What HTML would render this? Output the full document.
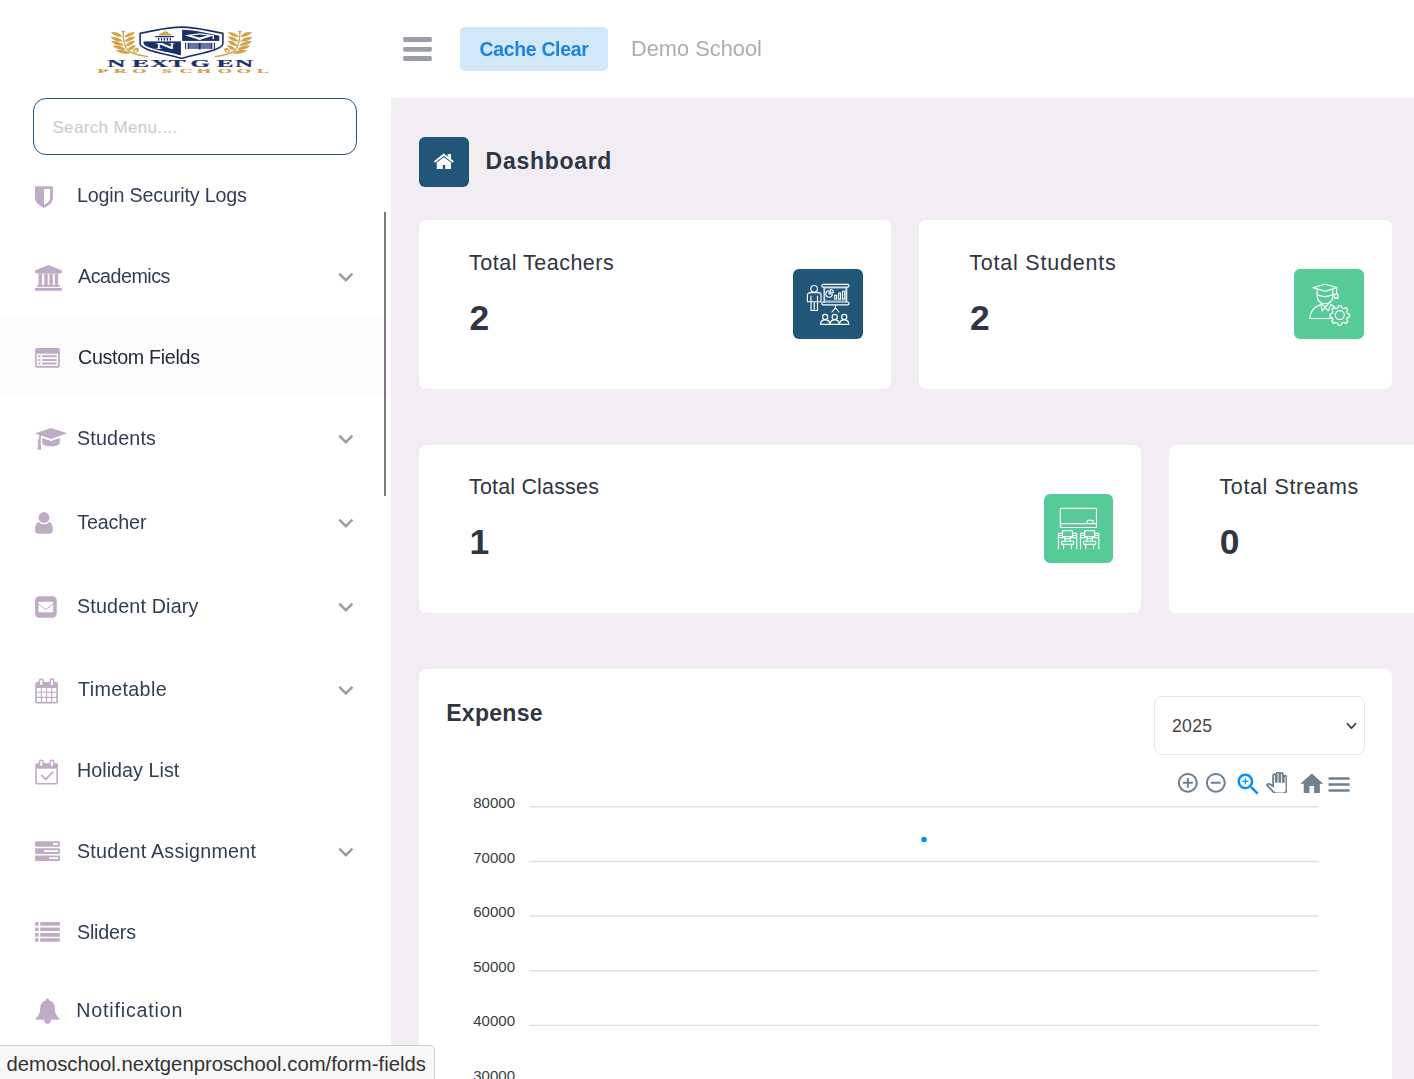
<!DOCTYPE html>
<html lang="en">
<head>
<meta charset="utf-8">
<title>Dashboard - Demo School</title>
<style>
*{box-sizing:border-box;margin:0;padding:0}
html,body{width:1414px;height:1079px;overflow:hidden;background:#fff}
body{position:relative;font-family:"Liberation Sans",sans-serif;color:#2f3542}
.abs{position:absolute}
#content{position:absolute;left:391px;top:98px;width:1023px;height:981px;background:#f1edf3}
#sidebar{position:absolute;left:0;top:0;width:391px;height:1079px;background:#fff}
#search{position:absolute;left:33px;top:98px;width:324px;height:57px;border:1px solid #215679;border-radius:13px;background:#fff}
#search span{position:absolute;left:18.4px;top:19.2px;font-size:17px;line-height:20px;color:#c9c9cd;letter-spacing:.35px}
.mi{position:absolute;left:77px;font-size:19.7px;line-height:24px;height:24px;color:#2f3e55;white-space:nowrap}
.ico{position:absolute;fill:#c5abca}
.chev{position:absolute;left:337px;width:18px;height:12px;fill:none;stroke:#9b9b9b;stroke-width:2.3;stroke-linecap:round;stroke-linejoin:round}
#hl{position:absolute;left:0;top:318px;width:391px;height:78px;background:#fcfcfc}
#thumb{position:absolute;left:384px;top:212px;width:2px;height:283.5px;background:#797979}
.card{position:absolute;background:#fff;border-radius:7px}
.ct{position:absolute;font-size:21.5px;line-height:26px;white-space:nowrap;color:#2f3542;letter-spacing:.5px}
.cn{position:absolute;font-size:35.4px;line-height:36px;font-weight:700;color:#2f3542}
.ib{position:absolute;width:70px;height:70px;border-radius:6px}
.yl{position:absolute;left:440px;width:75px;text-align:right;font-size:15px;line-height:18px;color:#373d3f}
.gl{position:absolute;left:529px;width:790px;height:1.5px;background:#e0e0e0}
</style>
</head>
<body>
<!-- header -->
<div id="content"></div>
<div id="sidebar"></div>

<!-- LOGO -->
<svg class="abs" style="left:90px;top:22px" width="184" height="58" viewBox="90 22 184 58">
<defs><clipPath id="shc"><path d="M143.6,35.7C153,34.2 166,29.8 181.4,29.8 197,29.8 210,34.2 219.3,35.7V43.2C219.3,48 199,51 181.4,55.4 164,51 143.6,48 143.6,43.2Z"/></clipPath></defs>
<g fill="#cfa44d"><path transform="translate(116.75,34.45) rotate(-159.8)" d="M-6.23,0 Q0,-3.50 6.23,0 Q0,3.50 -6.23,0Z"/><path transform="translate(116.65,39.20) rotate(-162.5)" d="M-6.66,0 Q0,-3.50 6.66,0 Q0,3.50 -6.66,0Z"/><path transform="translate(117.45,43.45) rotate(-161.8)" d="M-6.89,0 Q0,-3.50 6.89,0 Q0,3.50 -6.89,0Z"/><path transform="translate(119.30,47.70) rotate(-164.6)" d="M-7.16,0 Q0,-3.50 7.16,0 Q0,3.50 -7.16,0Z"/><path transform="translate(123.05,51.70) rotate(-168.6)" d="M-7.60,0 Q0,-3.50 7.60,0 Q0,3.50 -7.60,0Z"/><path transform="translate(129.55,34.65) rotate(-22.9)" d="M-6.03,0 Q0,-3.50 6.03,0 Q0,3.50 -6.03,0Z"/><path transform="translate(129.85,39.10) rotate(-24.6)" d="M-6.00,0 Q0,-3.50 6.00,0 Q0,3.50 -6.00,0Z"/><path transform="translate(130.35,43.45) rotate(-27.3)" d="M-5.57,0 Q0,-3.50 5.57,0 Q0,3.50 -5.57,0Z"/><path transform="translate(131.75,47.60) rotate(-30.0)" d="M-4.79,0 Q0,-3.50 4.79,0 Q0,3.50 -4.79,0Z"/><ellipse cx="123.2" cy="31.6" rx="2" ry=".9"/><ellipse cx="136" cy="50.3" rx="3" ry="2.2" transform="rotate(-35 136 50.3)"/><ellipse cx="135.6" cy="51" rx="1.3" ry=".9" fill="#fff" transform="rotate(-35 135.6 51)"/><path d="M123.2,31.8C123,38 124,45 127.5,50 130,53.3 136,54.8 147.6,56.6" fill="none" stroke="#cfa44d" stroke-width="1.3" stroke-linecap="round"/></g>
<g transform="translate(363,0) scale(-1,1)"><g fill="#cfa44d"><path transform="translate(116.75,34.45) rotate(-159.8)" d="M-6.23,0 Q0,-3.50 6.23,0 Q0,3.50 -6.23,0Z"/><path transform="translate(116.65,39.20) rotate(-162.5)" d="M-6.66,0 Q0,-3.50 6.66,0 Q0,3.50 -6.66,0Z"/><path transform="translate(117.45,43.45) rotate(-161.8)" d="M-6.89,0 Q0,-3.50 6.89,0 Q0,3.50 -6.89,0Z"/><path transform="translate(119.30,47.70) rotate(-164.6)" d="M-7.16,0 Q0,-3.50 7.16,0 Q0,3.50 -7.16,0Z"/><path transform="translate(123.05,51.70) rotate(-168.6)" d="M-7.60,0 Q0,-3.50 7.60,0 Q0,3.50 -7.60,0Z"/><path transform="translate(129.55,34.65) rotate(-22.9)" d="M-6.03,0 Q0,-3.50 6.03,0 Q0,3.50 -6.03,0Z"/><path transform="translate(129.85,39.10) rotate(-24.6)" d="M-6.00,0 Q0,-3.50 6.00,0 Q0,3.50 -6.00,0Z"/><path transform="translate(130.35,43.45) rotate(-27.3)" d="M-5.57,0 Q0,-3.50 5.57,0 Q0,3.50 -5.57,0Z"/><path transform="translate(131.75,47.60) rotate(-30.0)" d="M-4.79,0 Q0,-3.50 4.79,0 Q0,3.50 -4.79,0Z"/><ellipse cx="123.2" cy="31.6" rx="2" ry=".9"/><ellipse cx="136" cy="50.3" rx="3" ry="2.2" transform="rotate(-35 136 50.3)"/><ellipse cx="135.6" cy="51" rx="1.3" ry=".9" fill="#fff" transform="rotate(-35 135.6 51)"/><path d="M123.2,31.8C123,38 124,45 127.5,50 130,53.3 136,54.8 147.6,56.6" fill="none" stroke="#cfa44d" stroke-width="1.3" stroke-linecap="round"/></g></g>
<path d="M140.1,33.2C152,31.6 165,27.1 181.5,27.1 198,27.1 211,31.6 222.9,33.2V43.6C222.9,50 200,53.2 181.5,58.3 163,53.2 140.1,50 140.1,43.6Z" fill="#fff" stroke="#1b2f6b" stroke-width="1.6" stroke-linejoin="round"/>
<g clip-path="url(#shc)" fill="#1b2f6b">
<rect x="140" y="41.4" width="40.9" height="20"/>
<rect x="182.1" y="25" width="42" height="15.9"/>
</g>
<!-- building TL -->
<path d="M158.9,35.4C158.6,33.8 160.5,33.2 162,33.2 162.4,31.8 163.6,31.6 164.2,31.7 164.8,30.6 166.4,30.8 166.8,31.8 168,31.6 168.6,32.6 168.4,33.2 170,33.2 171.4,34 171,35.4Z" fill="#cfa44d"/>
<path d="M154.2,35.9H175L173,37.2H156.2Z" fill="#1b2f6b"/>
<g fill="#1b2f6b"><rect x="158" y="38" width="1.3" height="2.6"/><rect x="160.9" y="38" width="1.3" height="2.6"/><rect x="163.8" y="38" width="1.3" height="2.6"/><rect x="166.7" y="38" width="1.3" height="2.6"/><rect x="169.6" y="38" width="1.3" height="2.6"/></g>
<!-- N BL -->
<text x="0" y="0" transform="translate(155,49) scale(3.55,1)" font-family="Liberation Serif,serif" font-weight="700" font-size="8" fill="#fff">N</text>
<!-- cap TR -->
<path d="M184.8,35.3 199.6,33.3 214.4,35.3 199.6,39.9Z" fill="#fff"/>
<path d="M191.5,35.4 199.6,34.4 207.7,35.4 199.6,37.6Z" fill="#1b2f6b"/>
<rect x="212.6" y="35.3" width="1.4" height="3.8" fill="#fff"/>
<!-- book BR -->
<rect x="185" y="42.9" width="30" height="6" fill="#6473a6"/>
<rect x="185" y="42.9" width="1.2" height="6" fill="#1b2f6b"/><rect x="187.6" y="42.9" width="1.2" height="6" fill="#1b2f6b"/><rect x="198.8" y="42.9" width="1.8" height="6.6" fill="#1b2f6b"/><rect x="211.2" y="42.9" width="1.2" height="6" fill="#1b2f6b"/><rect x="213.8" y="42.9" width="1.2" height="6" fill="#1b2f6b"/>
<rect x="186.2" y="42.9" width="1.4" height="6" fill="#fff"/><rect x="212.4" y="42.9" width="1.4" height="6" fill="#fff"/>
<!-- wordmark -->
<text transform="translate(0,66.7) scale(2.55,1)" font-family="Liberation Serif,serif" font-weight="700" font-size="9.8" fill="#1b2f6b" stroke="#1b2f6b" stroke-width=".22" x="42.1 51.9 58.9 66.2 74.7 85.0 92.2">NEXTGEN</text>
<text transform="translate(0,73.3) scale(3,1)" font-family="Liberation Serif,serif" font-weight="700" font-size="6.1" fill="#cfa44d" stroke="#cfa44d" stroke-width=".12" x="32.45 37.95 44.1 50 53.9 59.8 65.6 72.6 78.95 85.6">PRO SCHOOL</text>
</svg>

<!-- hamburger -->
<svg class="abs" style="left:400px;top:34px" width="36" height="30" viewBox="400 34 36 30" fill="#9b9ea8"><rect x="403.2" y="37.1" width="28.6" height="4.8" rx="1.4"/><rect x="403.2" y="46.9" width="28.6" height="4.8" rx="1.4"/><rect x="403.2" y="56.05" width="28.6" height="4.85" rx="1.4"/></svg>

<div class="abs" style="left:460px;top:27px;width:148px;height:44px;border-radius:5px;background:#d2e8f9"></div>
<div class="abs" style="left:460px;top:27px;width:148px;height:44px;line-height:44px;text-align:center;font-size:19.4px;font-weight:700;color:#1b83e0;letter-spacing:-.3px;will-change:transform">Cache Clear</div>
<div class="abs" style="left:631px;top:34px;height:30px;line-height:30px;font-size:21.8px;color:#adaeb2;white-space:nowrap;will-change:transform">Demo School</div>

<!-- search -->
<div id="search"><span>Search Menu....</span></div>

<!-- sidebar menu -->
<div id="hl"></div>
<div id="thumb"></div>
<div id="menu" style="will-change:transform">
<!-- icons: one svg over the sidebar in page coords -->
<svg class="abs" style="left:0;top:160px" width="391" height="919" viewBox="0 160 391 919" fill="#bfabc5">
<!-- shield -->
<path fill-rule="evenodd" d="M35.8,186.2H52.1a.8.8 0 0 1 .8.8V198C52.9,203 47.2,206.4 43.95,207.9 40.7,206.4 35,203 35,198V187a.8.8 0 0 1 .8-.8ZM44,188.9V204.8C47,203.2 50.1,200.9 50.1,198V188.9Z"/>
<!-- university -->
<path d="M48.45,265.1 61.9,270.6V272.9H35V270.6Z"/>
<rect x="37" y="272.9" width="22.8" height="1.5" opacity=".7"/>
<rect x="38.5" y="274.2" width="3.4" height="11"/><rect x="44.2" y="274.2" width="3.5" height="11"/><rect x="49.3" y="274.2" width="3.5" height="11"/><rect x="54.8" y="274.2" width="3.3" height="11"/>
<rect x="37" y="285" width="22.8" height="1.9"/>
<rect x="35" y="288" width="26.9" height="2.8"/>
<!-- list-alt -->
<path fill-rule="evenodd" d="M36.9,348H58.1a1.8,1.8 0 0 1 1.8,1.8V366a1.8,1.8 0 0 1-1.8,1.8H36.9a1.8,1.8 0 0 1-1.8-1.8V349.8a1.8,1.8 0 0 1 1.8-1.8ZM36.7,353.8V366.1H58.1V353.8Z"/>
<rect x="38.3" y="355.2" width="2.2" height="2" rx=".4"/><rect x="42.2" y="355.2" width="14.5" height="2" rx=".5"/>
<rect x="38.3" y="358.9" width="2.2" height="2" rx=".4"/><rect x="42.2" y="358.9" width="14.5" height="2" rx=".5"/>
<rect x="38.3" y="362.5" width="2.2" height="2" rx=".4"/><rect x="42.2" y="362.5" width="14.5" height="2" rx=".5"/>
<!-- graduation cap -->
<path d="M51,428 67.2,433.3 51,438.9 41.2,435.6 40.5,440.2C41.2,440.8 41.2,442.2 40.5,442.8L41.3,449.7H37.4L38.2,442.8C37.5,442.2 37.5,440.8 38.2,440.2L39.5,435 34.8,433.4Z"/>
<path d="M42.2,438 51,441.1 59.8,438V442.8C59.8,445 56,446.4 51,446.4 46,446.4 42.2,445 42.2,442.8Z"/>
<!-- user -->
<path d="M39.3,522C41,524 42.4,524.3 43.95,524.3 45.5,524.3 47,524 48.6,522 51.6,522 52.9,526 52.9,530 52.9,532.4 51.4,533.8 49.5,533.8H38.4C36.5,533.8 35,532.4 35,530 35,526 36.3,522 39.3,522Z"/>
<circle cx="43.95" cy="517.5" r="6.3" fill="#fff"/>
<circle cx="43.95" cy="517.5" r="5.4"/>
<!-- envelope-square -->
<rect x="35.1" y="596.2" width="21.6" height="21.5" rx="4.2"/>
<rect x="38.5" y="601.8" width="14.7" height="10.5" rx=".8" fill="#fff"/>
<path d="M38.4,603.9 44.2,608.3C45.2,609.1 46.4,609.1 47.4,608.3L53.3,603.9" fill="none" stroke="#bfabc5" stroke-width="1"/>
<!-- calendar -->
<rect x="35.2" y="682" width="22.8" height="21.5" rx="1.8"/>
<rect x="38.8" y="678.3" width="5" height="8" rx="2.5"/><rect x="49.4" y="678.3" width="5" height="8" rx="2.5"/>
<g fill="#fff">
<rect x="40.2" y="679.7" width="2.2" height="5.3" rx="1.1"/><rect x="50.8" y="679.7" width="2.2" height="5.3" rx="1.1"/>
<rect x="36.8" y="688" width="4" height="3.7"/><rect x="41.9" y="688" width="4.1" height="3.7"/><rect x="47.1" y="688" width="4.1" height="3.7"/><rect x="52.3" y="688" width="4" height="3.7"/>
<rect x="36.8" y="692.7" width="4" height="4.1"/><rect x="41.9" y="692.7" width="4.1" height="4.1"/><rect x="47.1" y="692.7" width="4.1" height="4.1"/><rect x="52.3" y="692.7" width="4" height="4.1"/>
<rect x="36.8" y="698" width="4" height="3.8"/><rect x="41.9" y="698" width="4.1" height="3.8"/><rect x="47.1" y="698" width="4.1" height="3.8"/><rect x="52.3" y="698" width="4" height="3.8"/>
</g>
<!-- calendar-check-o -->
<rect x="35.2" y="763.2" width="22.8" height="21.4" rx="1.8"/>
<rect x="38.8" y="759.5" width="5" height="8" rx="2.5"/><rect x="49.4" y="759.5" width="5" height="8" rx="2.5"/>
<g fill="#fff">
<rect x="40.2" y="760.9" width="2.2" height="5.3" rx="1.1"/><rect x="50.8" y="760.9" width="2.2" height="5.3" rx="1.1"/>
<rect x="36.8" y="768.7" width="19.6" height="14.2"/>
</g>
<path d="M41.6,775.3 45.7,779.3 52.7,772.1" fill="none" stroke="#bfabc5" stroke-width="1.7" stroke-linecap="round" stroke-linejoin="round"/>
<!-- tasks -->
<rect x="35.1" y="841.2" width="24.8" height="5.6" rx=".9"/><rect x="35.1" y="848.3" width="24.8" height="5.6" rx=".9"/><rect x="35.1" y="855.4" width="24.8" height="5.5" rx=".9"/>
<g fill="#fff"><rect x="53" y="843.1" width="5" height="1.8"/><rect x="43.9" y="850.2" width="14.1" height="1.8"/><rect x="49.1" y="857.3" width="8.9" height="1.8"/></g>
<!-- list -->
<g>
<rect x="35.1" y="922.1" width="3.5" height="3.6" rx=".4"/><rect x="40.2" y="922.1" width="19.7" height="3.6" rx=".4"/>
<rect x="35.1" y="927.5" width="3.5" height="3.5" rx=".4"/><rect x="40.2" y="927.5" width="19.7" height="3.5" rx=".4"/>
<rect x="35.1" y="933" width="3.5" height="3.7" rx=".4"/><rect x="40.2" y="933" width="19.7" height="3.7" rx=".4"/>
<rect x="35.1" y="938.2" width="3.5" height="3.6" rx=".4"/><rect x="40.2" y="938.2" width="19.7" height="3.6" rx=".4"/>
</g>
<!-- bell -->
<path d="M47.5,998.2a1.6,1.6 0 0 1 1.6,1.6v.7C52.3,1001.2 54.8,1003.7 54.8,1008 54.8,1013 56.3,1015.4 59.2,1018.3 59.8,1018.9 59.4,1019.8 58.5,1019.8H36.5C35.6,1019.8 35.2,1018.9 35.8,1018.3 38.7,1015.4 40.2,1013 40.2,1008 40.2,1003.7 42.7,1001.2 45.9,1000.5v-.7a1.6,1.6 0 0 1 1.6-1.6Z"/>
<path d="M44,1019.3a3.5,4.4 0 0 0 7,0Z"/>
<!-- chevrons -->
<g fill="none" stroke="#9d9d9f" stroke-width="2.5" stroke-linecap="butt" stroke-linejoin="miter">
<path d="M339.3,273.6 345.85,280.2 352.4,273.6"/>
<path d="M339.3,435.6 345.85,442.2 352.4,435.6"/>
<path d="M339.3,519.6 345.85,526.2 352.4,519.6"/>
<path d="M339.3,603.6 345.85,610.2 352.4,603.6"/>
<path d="M339.3,686.8 345.85,693.4 352.4,686.8"/>
<path d="M339.3,848.6 345.85,855.2 352.4,848.6"/>
</g>
</svg>
<div class="mi" style="top:183.2px;left:77.0px;letter-spacing:-0.17px">Login Security Logs</div>
<div class="mi" style="top:263.7px;left:78.0px;letter-spacing:-0.48px">Academics</div>
<div class="mi" style="top:344.8px;left:78.0px;letter-spacing:-0.32px;color:#202b3c">Custom Fields</div>
<div class="mi" style="top:425.8px;left:77.0px;letter-spacing:0.17px">Students</div>
<div class="mi" style="top:510.0px;left:77.2px;letter-spacing:-0.13px">Teacher</div>
<div class="mi" style="top:594.2px;left:77.0px;letter-spacing:0.17px">Student Diary</div>
<div class="mi" style="top:676.8px;left:78.0px;letter-spacing:0.36px">Timetable</div>
<div class="mi" style="top:757.8px;left:77.0px;letter-spacing:0.05px">Holiday List</div>
<div class="mi" style="top:838.9px;left:77.0px;letter-spacing:0.22px">Student Assignment</div>
<div class="mi" style="top:919.6px;left:77.0px;letter-spacing:-0.2px">Sliders</div>
<div class="mi" style="top:997.8px;left:76.3px;letter-spacing:0.79px">Notification</div>
</div>


<!-- page title -->
<div class="abs" style="left:419px;top:137px;width:50px;height:50px;border-radius:6px;background:#215679"></div>
<div class="abs" style="left:485.6px;top:146.3px;line-height:30px;font-size:23px;font-weight:700;color:#2f3542;white-space:nowrap;letter-spacing:.7px">Dashboard</div>

<!-- cards -->
<div class="card" style="left:419px;top:220px;width:472px;height:169px"></div>
<div class="card" style="left:919px;top:220px;width:473px;height:169px"></div>
<div class="card" style="left:419px;top:445px;width:722px;height:168px"></div>
<div class="card" style="left:1169px;top:445px;width:300px;height:168px"></div>
<div class="card" style="left:419px;top:669px;width:973px;height:440px"></div>

<div class="ct" style="left:469px;top:249.6px">Total Teachers</div>
<div class="cn" style="left:469.6px;top:300px">2</div>
<div class="ct" style="left:969.3px;top:249.6px;letter-spacing:.78px">Total Students</div>
<div class="cn" style="left:970px;top:300px">2</div>
<div class="ct" style="left:469px;top:473.7px;letter-spacing:.17px">Total Classes</div>
<div class="cn" style="left:469.5px;top:524.2px">1</div>
<div class="ct" style="left:1219.5px;top:473.7px;letter-spacing:.6px">Total Streams</div>
<div class="cn" style="left:1219.8px;top:524.2px">0</div>

<div class="ib" style="left:793px;top:269.4px;background:#215679"></div>
<div class="ib" style="left:1294px;top:269.4px;background:#56cb98"></div>
<div class="ib" style="left:1043.6px;top:493.6px;width:69.6px;height:69.6px;background:#56cb98"></div>

<!-- chart -->
<div class="abs" style="left:446.2px;top:697.9px;line-height:30px;font-size:23px;font-weight:700;color:#2f3542;white-space:nowrap;letter-spacing:.3px">Expense</div>
<div class="abs" style="left:1154px;top:696px;width:211px;height:59px;border:1px solid #e5e7ee;border-radius:8px;background:#fff"></div>
<div class="abs" style="left:1172px;top:714px;line-height:24px;font-size:17.6px;color:#444;letter-spacing:.3px">2025</div>

<svg class="abs" style="left:419px;top:760px" width="973" height="319" viewBox="419 760 973 319"><g stroke="#e0e0e0" stroke-width="1.45"><line x1="529" y1="806.75" x2="1318.7" y2="806.75"/><line x1="529" y1="861.40" x2="1318.7" y2="861.40"/><line x1="529" y1="916.05" x2="1318.7" y2="916.05"/><line x1="529" y1="970.70" x2="1318.7" y2="970.70"/><line x1="529" y1="1025.35" x2="1318.7" y2="1025.35"/><line x1="529" y1="1080.00" x2="1318.7" y2="1080.00"/></g><circle cx="924" cy="839.4" r="2.75" fill="#008ffb"/></svg>
<div class="yl" style="top:794px">80000</div>
<div class="yl" style="top:848.6px">70000</div>
<div class="yl" style="top:903.2px">60000</div>
<div class="yl" style="top:957.8px">50000</div>
<div class="yl" style="top:1012.4px">40000</div>
<div class="yl" style="top:1067px">30000</div>

<!-- home icon -->
<svg class="abs" style="left:419px;top:137px" width="50" height="50" viewBox="419 137 50 50" fill="#fff">
<path d="M433.9,161.2 443.8,153.6 447.7,156.6V154.1H451V159.1L453.9,161.2 452.8,162.7 443.8,155.9 435,162.7Z"/>
<path d="M436.8,162.6 443.8,157.2 451,162.6V168.9H445.2V165H442.8V168.9H436.8Z"/>
</svg>
<!-- teachers icon -->
<svg class="abs" style="left:793px;top:269px" width="70" height="70" viewBox="793 269 70 70" fill="none" stroke="#fff" stroke-width="1.15" stroke-linejoin="round" stroke-linecap="round">
<circle cx="814.1" cy="288.8" r="3.3"/>
<path d="M807.4,301.7V295.2A2.6,2.6 0 0 1 810,292.6H818.4A2.6,2.6 0 0 1 821,295.2V301.7H807.4ZM811,296V310.5H817.5V296M814.25,301.9V310.5"/>
<rect x="821.8" y="284.3" width="27.2" height="2.8" rx="1.4"/>
<rect x="821.8" y="302" width="27.2" height="2.9" rx="1.4"/>
<path d="M824.1,287.2V301.9M846.7,287.2V301.9M835.4,305V307.9L832,312M835.4,307.9 838.9,312"/>
<rect x="825.2" y="288.1" width="20.5" height="12.7" stroke-width=".7" opacity=".8"/>
<path d="M829,290.8A3.2,3.2 0 1 0 832.3,294H829Z"/>
<path d="M830.3,289.5A3.2,3.2 0 0 1 833.5,292.7H830.3Z"/>
<rect x="834.7" y="295.4" width="1.9" height="3.7"/><rect x="838.6" y="293.1" width="2" height="6"/><rect x="842.6" y="291.2" width="2.2" height="7.9"/>
<circle cx="825.2" cy="316.9" r="2.6"/><circle cx="834.7" cy="316.9" r="2.6"/><circle cx="844.2" cy="316.9" r="2.6"/>
<path d="M820.6,324.4C820.6,321.5 822.5,319.9 825.2,319.9 827.9,319.9 829.8,321.5 829.8,324.4ZM830.1,324.4C830.1,321.5 832,319.9 834.7,319.9 837.4,319.9 839.3,321.5 839.3,324.4ZM839.6,324.4C839.6,321.5 841.5,319.9 844.2,319.9 846.9,319.9 848.8,321.5 848.8,324.4Z"/>
</svg>
<!-- students icon -->
<svg class="abs" style="left:1294px;top:269px" width="70" height="70" viewBox="1294 269 70 70" fill="none" stroke="#fff" stroke-width="1.15" stroke-linejoin="round" stroke-linecap="round">
<path d="M1313,287.6 1325.1,284.2 1337,287.6 1325.1,291.2Z"/>
<path d="M1317.2,289V296.5C1317.2,300.8 1320.8,303.7 1325.1,303.7 1329.4,303.7 1332.8,300.8 1332.8,296.5V289M1317.2,294.8C1320,295.6 1322.5,296.6 1325.1,296.6 1327.7,296.6 1330,295.6 1332.8,294.8"/>
<path d="M1336.6,287.8V294M1334.3,294H1337.9V298.6L1336.1,297.8 1334.3,298.6Z"/>
<path d="M1320.9,304.4 1322.3,311 1325.1,307.2 1328.1,311 1331,304.4M1321,303 1325.1,307.2 1329.3,303"/>
<path d="M1331.8,318.5H1309.6C1310.3,311.5 1314.5,306.5 1320.6,304.6M1330.6,304.6C1332.2,305.2 1333.6,306 1334.8,307"/>
<circle cx="1339.8" cy="315.1" r="4.5"/>
<path d="M1338.4,305.6H1341.2L1341.8,307.8 1343.8,308.7 1345.8,307.5 1347.8,309.5 1346.6,311.5 1347.4,313.5 1349.6,314.1V316.9L1347.4,317.5 1346.6,319.5 1347.8,321.5 1345.8,323.5 1343.8,322.3 1341.8,323.2 1341.2,325.4H1338.4L1337.8,323.2 1335.8,322.3 1333.8,323.5 1331.8,321.5 1333,319.5 1332.2,317.5 1330,316.9V314.1L1332.2,313.5 1333,311.5 1331.8,309.5 1333.8,307.5 1335.8,308.7 1337.8,307.8Z"/>
</svg>
<!-- classes icon -->
<svg class="abs" style="left:1044px;top:493px" width="70" height="70" viewBox="1044 493 70 70" fill="none" stroke="#fff" stroke-width="1.15" stroke-linejoin="round" stroke-linecap="round">
<rect x="1060.3" y="508.3" width="36.2" height="19.2" rx=".5"/>
<path d="M1060.3,523.6H1096.5M1087.4,523.6V520.4H1093V523.6"/>
<g id="desk">
<rect x="1062.5" y="530.6" width="10" height="6" rx=".4"/>
<path d="M1062.5,533.3H1058.4V548.8M1072.5,533.3H1076.7V548.8M1058.4,537.6H1063.5M1071.5,537.6H1076.7M1059,535.5H1062M1073,535.5H1076"/>
<path d="M1064.9,536.6V541.2M1070.3,536.6V541.2M1065,538.6H1070.2"/>
<rect x="1061.6" y="541.2" width="12" height="3.2" rx=".4"/>
<path d="M1063.6,544.4V548.8M1071.5,544.4V548.8"/>
</g>
<use href="#desk" x="22.1"/>
</svg>
<!-- select chevron -->
<svg class="abs" style="left:1345px;top:720px" width="14" height="12" viewBox="1345 720 14 12" fill="none" stroke="#343a40" stroke-width="1.6" stroke-linecap="round" stroke-linejoin="round"><path d="M1347.4,723.7 1351.5,728.1 1355.6,723.7"/></svg>
<!-- chart toolbar -->
<svg class="abs" style="left:1176.05px;top:771.25px" width="23.7" height="23.7" viewBox="0 0 24 24" fill="#6e8192"><path d="M13 7h-2v4H7v2h4v4h2v-4h4v-2h-4V7zm-1-5C6.48 2 2 6.480 2 12s4.480 10 10 10 10-4.480 10-10S17.520 2 12 2zm0 18c-4.410 0-8-3.590-8-8s3.590-8 8-8 8 3.590 8 8-3.590 8-8 8z"/></svg>
<svg class="abs" style="left:1204.2px;top:771.25px" width="23.7" height="23.7" viewBox="0 0 24 24" fill="#6e8192"><path d="M7 11v2h10v-2H7zm5-9C6.480 2 2 6.480 2 12s4.480 10 10 10 10-4.480 10-10S17.520 2 12 2zm0 18c-4.410 0-8-3.590-8-8s3.590-8 8-8 8 3.590 8 8-3.590 8-8 8z"/></svg>
<svg class="abs" style="left:1233.9px;top:770.3px" width="28.8" height="28.8" viewBox="0 0 24 24" fill="#008ffb"><path d="M15.5 14h-.79l-.28-.27C15.410 12.590 16 11.110 16 9.500 16 5.910 13.090 3 9.500 3S3 5.910 3 9.500 5.910 16 9.500 16c1.610 0 3.090-.59 4.230-1.570l.27.28v.79l5 4.990L20.490 19l-4.990-5zm-6 0C7.010 14 5 11.990 5 9.500S7.010 5 9.500 5 14 7.010 14 9.500 11.990 14 9.500 14z"/><path d="M12 10h-2v2H9v-2H7V9h2V7h1v2h2v1z"/></svg>
<svg class="abs" style="left:1266.1px;top:771.6px" width="21.4" height="21.4" viewBox="0 0 24 24" fill="#fff" stroke="#6e8192" stroke-width="2"><path d="M23 5.500V20c0 2.200-1.800 4-4 4h-7.300c-1.080 0-2.100-.43-2.850-1.190L1 14.830s1.260-1.230 1.300-1.250c.22-.19.490-.29.790-.29.220 0 .42.060.6.160.4.010 4.310 2.460 4.310 2.460V4c0-.83.670-1.500 1.500-1.500S11 3.170 11 4v7h1V1.500c0-.83.670-1.500 1.500-1.500S15 .67 15 1.500V11h1V2.500c0-.83.670-1.500 1.500-1.500s1.500.67 1.500 1.500V11h1V5.500c0-.83.670-1.500 1.500-1.500s1.500.67 1.500 1.500z"/></svg>
<svg class="abs" style="left:1297.6px;top:770.25px" width="27.6" height="27.6" viewBox="0 0 24 24" fill="#6e8192"><path d="M10 20v-6h4v6h5v-8h3L12 3 2 12h3v8z"/></svg>
<svg class="abs" style="left:1325.4px;top:769.95px" width="28.1" height="28.95" viewBox="0 0 24 24" preserveAspectRatio="none" fill="#6e8192"><path d="M3 18h18v-2H3v2zm0-5h18v-2H3v2zm0-7v2h18V6H3z"/></svg>

<!-- status bubble -->
<div class="abs" style="left:-1px;top:1045px;width:436px;height:36px;background:#f8f8f8;border:1px solid #cdcdcd;border-top-right-radius:5px"></div>
<div class="abs" style="left:6.5px;top:1050.5px;line-height:26px;font-size:20.3px;color:#333;white-space:nowrap">demoschool.nextgenproschool.com/form-fields</div>
</body>
</html>
